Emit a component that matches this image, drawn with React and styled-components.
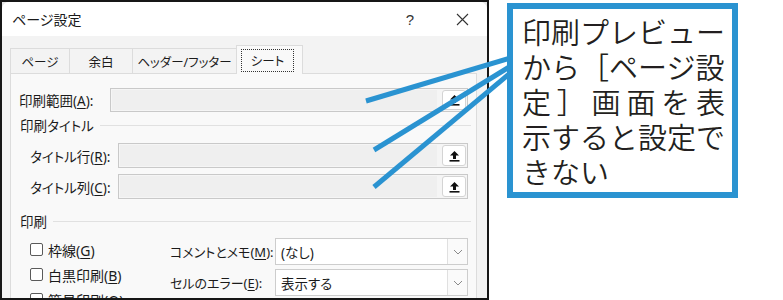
import React from "react";
import styled, { createGlobalStyle } from "styled-components";

const GlobalStyle = createGlobalStyle`
  html, body {
    margin: 0;
    padding: 0;
    background: #ffffff;
  }
  * {
    box-sizing: border-box;
  }
`;

const UI_FONT = `"Noto Sans", "Noto Sans CJK JP", sans-serif`;

const UploadIcon = () => (
  <svg width="11" height="12" viewBox="0 0 11 12">
    <path d="M5.5 1 L10 5.5 L7 5.5 L7 9 L4 9 L4 5.5 L1 5.5 Z" fill="#111" />
    <rect x="0.5" y="10" width="10" height="1.6" fill="#111" />
  </svg>
);

const Chevron = () => (
  <svg width="10" height="6" viewBox="0 0 10 6">
    <path d="M1 1 L5 5 L9 1" fill="none" stroke="#8a8a8a" strokeWidth="1" />
  </svg>
);

const CloseIcon = () => (
  <svg width="13" height="13" viewBox="0 0 13 13">
    <path d="M1 1 L12 12 M12 1 L1 12" stroke="#333" strokeWidth="1.1" />
  </svg>
);

const Key = ({ children }) => <u>{children}</u>;

const App = () => {
  return (
    <>
      <GlobalStyle />
      <Canvas>
        <Frame>
          <Window>
            <TitleBar>
              <Title>ページ設定</Title>
              <HelpButton>?</HelpButton>
              <CloseButton>
                <CloseIcon />
              </CloseButton>
            </TitleBar>
            <Body>
              <Tabs>
                <Tab $width={60}>ページ</Tab>
                <Tab $width={64}>余白</Tab>
                <Tab $width={105}>ヘッダー/フッター</Tab>
                <Tab $width={67} $active>
                  <FocusRing>シート</FocusRing>
                </Tab>
              </Tabs>
              <Panel>
                <Row $indent={0} $label={91} $field={358}>
                  <Label $wide>
                    印刷範囲(<Key>A</Key>):
                  </Label>
                  <Field>
                    <Input />
                    <PickButton>
                      <UploadIcon />
                    </PickButton>
                  </Field>
                </Row>

                <GroupTitle $top={5}>印刷タイトル</GroupTitle>

                <Row $indent={11} $label={88} $field={350} $top={10} $height={25}>
                  <Label $wide>
                    タイトル行(<Key>R</Key>):
                  </Label>
                  <Field>
                    <Input />
                    <PickButton>
                      <UploadIcon />
                    </PickButton>
                  </Field>
                </Row>
                <Row $indent={11} $label={88} $field={350} $top={6} $height={25}>
                  <Label $wide>
                    タイトル列(<Key>C</Key>):
                  </Label>
                  <Field>
                    <Input />
                    <PickButton>
                      <UploadIcon />
                    </PickButton>
                  </Field>
                </Row>

                <GroupTitle $top={14}>印刷</GroupTitle>

                <Bottom>
                  <Checks>
                    <CheckItem>
                      <Box />
                      <span>
                        枠線(<Key>G</Key>)
                      </span>
                    </CheckItem>
                    <CheckItem>
                      <Box />
                      <span>
                        白黒印刷(<Key>B</Key>)
                      </span>
                    </CheckItem>
                    <CheckItem>
                      <Box />
                      <span>
                        簡易印刷(<Key>Q</Key>)
                      </span>
                    </CheckItem>
                  </Checks>
                  <Options>
                    <OptionRow>
                      <Label>
                        コメントとメモ(<Key>M</Key>):
                      </Label>
                      <Select>
                        <SelectValue>(なし)</SelectValue>
                        <SelectArrow>
                          <Chevron />
                        </SelectArrow>
                      </Select>
                    </OptionRow>
                    <OptionRow>
                      <Label>
                        セルのエラー(<Key>E</Key>):
                      </Label>
                      <Select>
                        <SelectValue>表示する</SelectValue>
                        <SelectArrow>
                          <Chevron />
                        </SelectArrow>
                      </Select>
                    </OptionRow>
                  </Options>
                </Bottom>
              </Panel>
            </Body>
          </Window>
        </Frame>

        <Callout>
          <Line>印刷プレビュー</Line>
          <Line>から［ページ設</Line>
          <Line $spread>定］画面を表</Line>
          <Line>示すると設定で</Line>
          <Line>きない</Line>
        </Callout>

        <Leaders viewBox="0 0 783 300" width="783" height="300">
          <line x1="366" y1="101" x2="514" y2="57" />
          <line x1="374" y1="150" x2="514" y2="64" />
          <line x1="374" y1="187" x2="514" y2="70" />
        </Leaders>
      </Canvas>
    </>
  );
};

export default App;

const Canvas = styled.div`
  position: relative;
  width: 783px;
  height: 300px;
  display: flex;
  align-items: flex-start;
  overflow: hidden;
  background: #ffffff;
`;

const Frame = styled.div`
  flex-shrink: 0;
  width: 489px;
  height: 300px;
  border: 2px solid #161616;
  background: #e6e6e6;
  overflow: hidden;
`;

const Window = styled.div`
  height: 100%;
  display: flex;
  flex-direction: column;
  border-radius: 7px 7px 0 0;
  background: #f3f3f3;
  overflow: hidden;
  font-family: ${UI_FONT};
  font-feature-settings: "palt";
  font-size: 13px;
  color: #1b1b1b;

  u {
    text-underline-offset: 2px;
  }
`;

const TitleBar = styled.div`
  height: 34px;
  flex-shrink: 0;
  display: flex;
  align-items: center;
  padding-left: 10px;
  background: #ffffff;
  font-size: 14px;
  color: #1a1a1a;
`;

const Title = styled.div`
  flex: 1;
`;

const HelpButton = styled.div`
  width: 24px;
  text-align: center;
  font-family: "Liberation Sans", sans-serif;
  font-size: 15px;
  color: #333;
  margin-right: 20px;
`;

const CloseButton = styled.div`
  width: 40px;
  margin-right: 5px;
  display: flex;
  justify-content: center;
  align-items: center;
`;

const Body = styled.div`
  flex: 1;
  display: flex;
  flex-direction: column;
  padding: 9px 0 0 8px;
`;

const Tabs = styled.div`
  display: flex;
  align-items: flex-end;
  height: 28px;
  position: relative;
  z-index: 1;
`;

const Tab = styled.div`
  width: ${(p) => p.$width}px;
  height: ${(p) => (p.$active ? 29 : 25)}px;
  margin-right: -1px;
  margin-bottom: ${(p) => (p.$active ? -1 : 0)}px;
  display: flex;
  align-items: ${(p) => (p.$active ? "flex-start" : "center")};
  justify-content: center;
  border: 1px solid #dcdcdc;
  border-bottom: none;
  background: ${(p) => (p.$active ? "#f9f9f9" : "#f3f3f3")};
  font-size: 12.5px;
  white-space: nowrap;
  color: #1b1b1b;
`;

const FocusRing = styled.div`
  margin-top: 3px;
  width: 53px;
  height: 23px;
  display: flex;
  align-items: center;
  justify-content: center;
  border: 1px dotted #333;
  margin-right: 4px;
`;

const Panel = styled.div`
  flex: 1;
  width: 467px;
  padding: 14px 5px 0 8px;
  border: 1px solid #dcdcdc;
  border-bottom: none;
  background: #f9f9f9;
`;

const Row = styled.div`
  display: grid;
  grid-template-columns: ${(p) => p.$label}px ${(p) => p.$field}px;
  align-items: center;
  height: ${(p) => p.$height || 24}px;
  margin-top: ${(p) => p.$top || 0}px;
  padding-left: ${(p) => p.$indent}px;
`;

const Label = styled.div`
  white-space: nowrap;
  font-size: ${(p) => (p.$wide ? 13.5 : 13)}px;
  color: #1b1b1b;
`;

const Field = styled.div`
  height: 100%;
  display: flex;
  gap: 5px;
  padding: 1px;
  border: 1px solid #c9c9c9;
  background: #f5f5f5;
`;

const Input = styled.div`
  flex: 1;
  background: #efefef;
`;

const PickButton = styled.div`
  width: 24px;
  display: flex;
  align-items: center;
  justify-content: center;
  border: 1px solid #d4d4d4;
  border-radius: 3px;
  background: #ffffff;
`;

const GroupTitle = styled.div`
  display: flex;
  align-items: center;
  gap: 6px;
  height: 16px;
  margin-top: ${(p) => p.$top}px;
  padding-left: 1px;
  white-space: nowrap;
  font-size: 13.5px;

  &::after {
    content: "";
    flex: 1;
    height: 1px;
    background: #e1e1e1;
  }
`;

const Bottom = styled.div`
  display: flex;
  margin-top: 8px;
`;

const Checks = styled.div`
  width: 151px;
  padding-left: 11px;
  display: flex;
  flex-direction: column;
`;

const CheckItem = styled.div`
  height: 25px;
  display: flex;
  align-items: center;
  gap: 5px;
  white-space: nowrap;
  font-size: 14px;
`;

const Box = styled.span`
  width: 13px;
  height: 13px;
  border: 1px solid #5a5a5a;
  border-radius: 2px;
  background: #ffffff;
`;

const Options = styled.div`
  display: flex;
  flex-direction: column;
  gap: 4px;
  padding-top: 1px;
`;

const OptionRow = styled.div`
  display: grid;
  grid-template-columns: 105px 193px;
  align-items: center;
  height: 27px;
`;

const Select = styled.div`
  height: 100%;
  display: flex;
  border: 1px solid #cdcdcd;
  background: #ffffff;
`;

const SelectValue = styled.div`
  flex: 1;
  display: flex;
  align-items: center;
  padding-left: 5px;
  font-size: 13.5px;
`;

const SelectArrow = styled.div`
  width: 20px;
  display: flex;
  align-items: center;
  justify-content: center;
  border-left: 1px solid #e0e0e0;
  background: #fafafa;
`;

const Callout = styled.div`
  position: relative;
  z-index: 2;
  flex-shrink: 0;
  width: 231px;
  height: 195px;
  margin: 3px 0 0 18px;
  padding: 5px 7px 0 9px;
  border: 6px solid #2a93d1;
  background: #ffffff;
  font-family: "Noto Sans CJK JP", sans-serif;
  font-weight: 350;
  font-size: 29px;
  line-height: 35px;
  color: #231f20;
`;

const Line = styled.div`
  white-space: nowrap;
  text-align: ${(p) => (p.$spread ? "justify" : "left")};
  text-align-last: ${(p) => (p.$spread ? "justify" : "auto")};
`;

const Leaders = styled.svg`
  position: absolute;
  inset: 0;
  z-index: 1;
  pointer-events: none;

  line {
    stroke: #2a93d1;
    stroke-width: 5;
  }
`;
